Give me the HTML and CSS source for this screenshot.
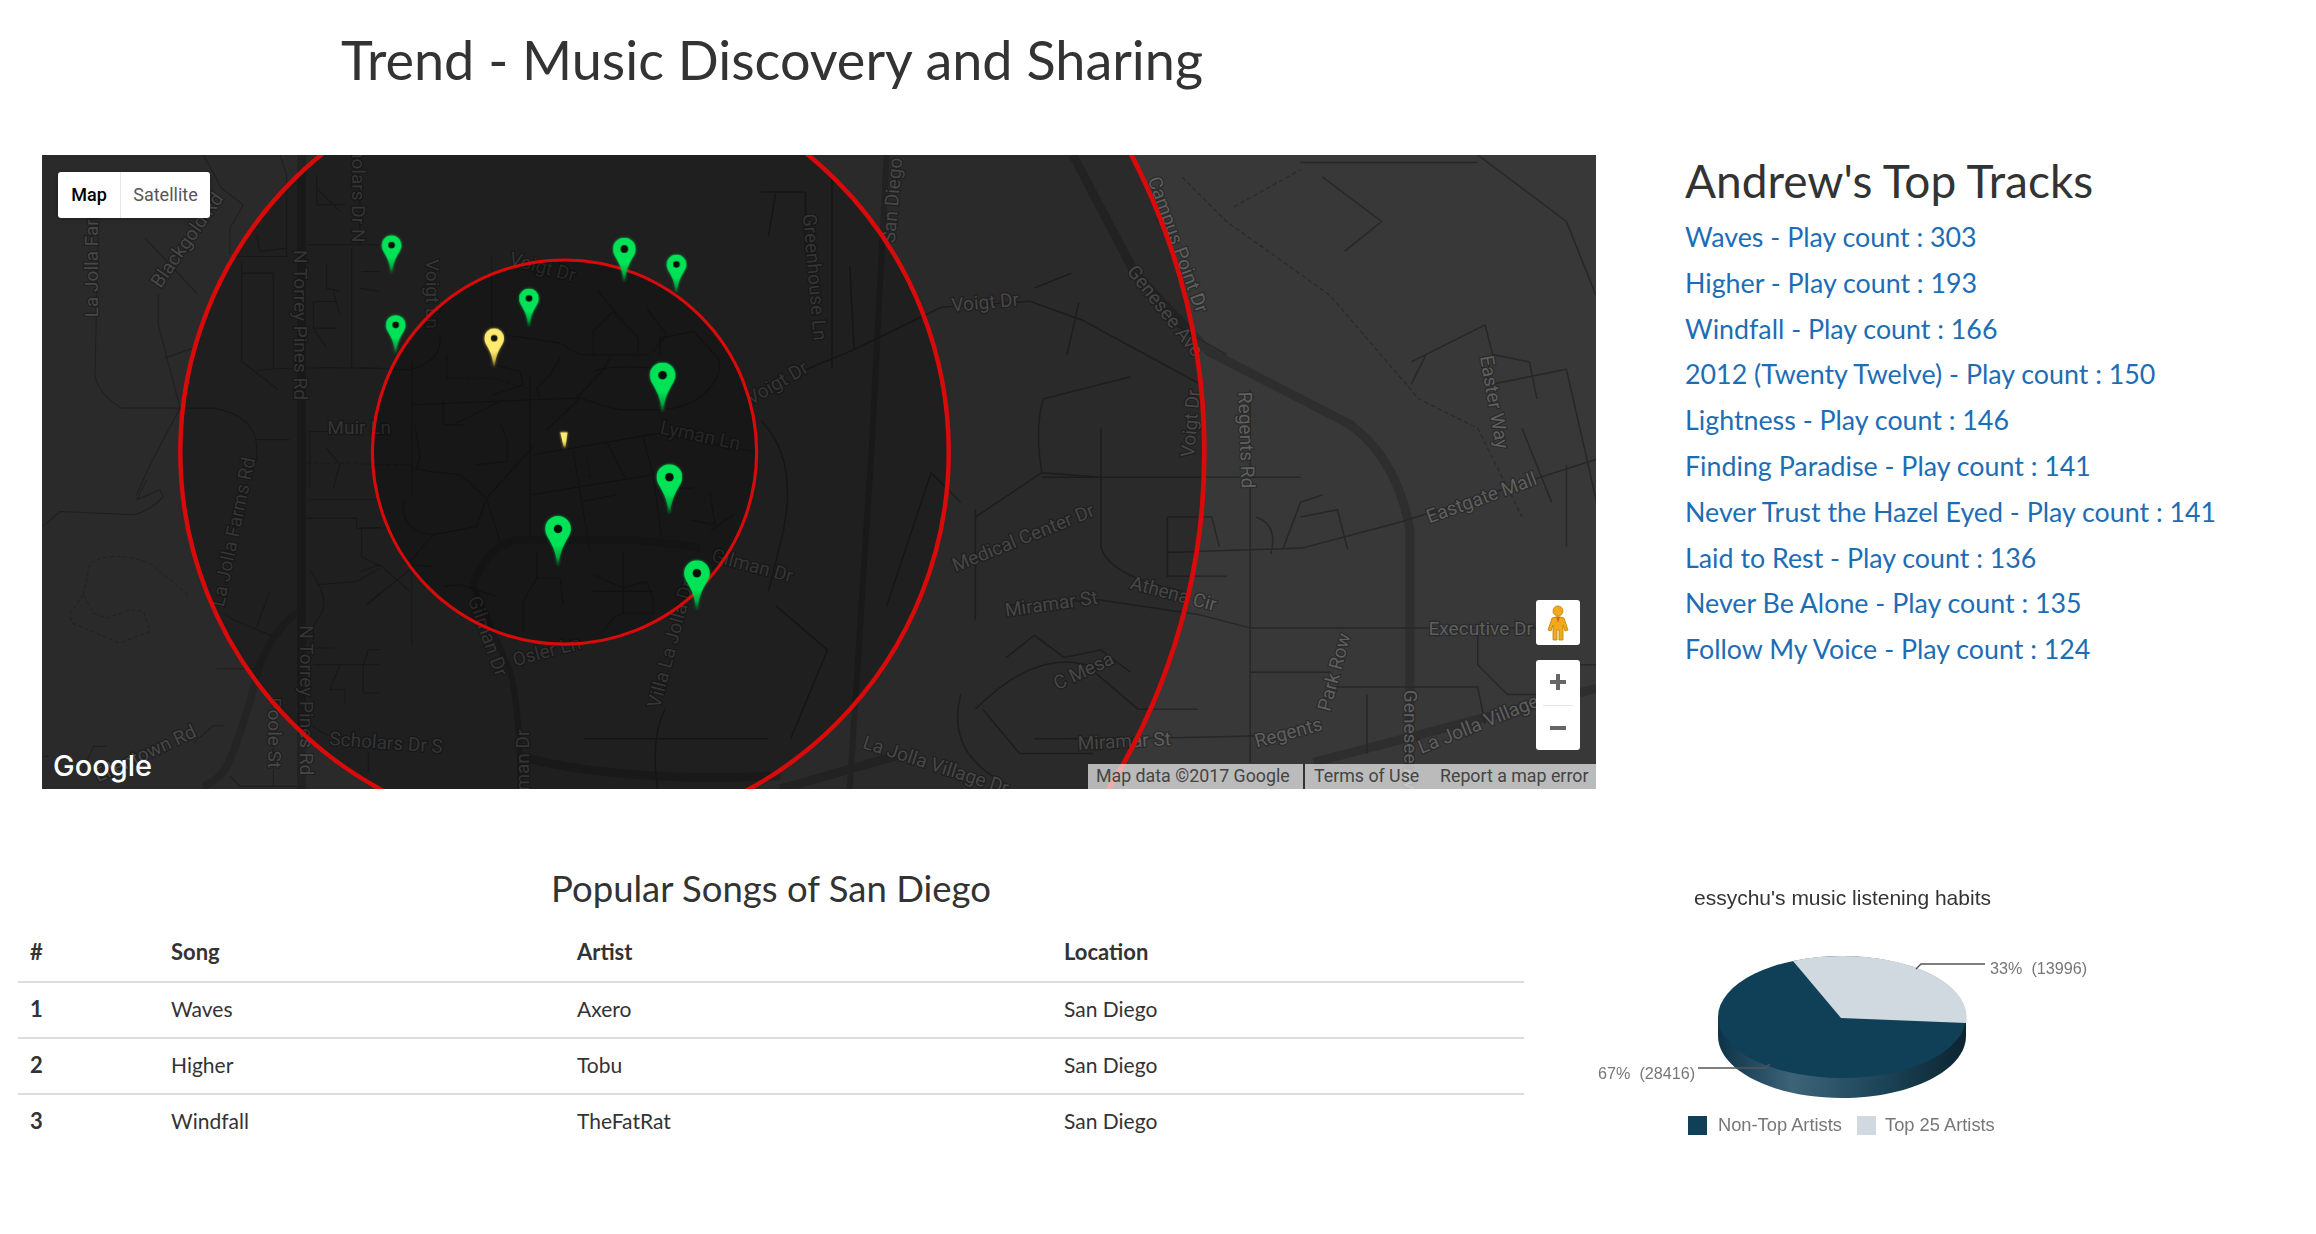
FILE: index.html
```html
<!DOCTYPE html>
<html lang="en">
<head>
    <meta charset="UTF-8">
    <meta name="viewport" content="width=device-width, initial-scale=1.0">
    <title>Trend - Music Discovery and Sharing</title>
    <link rel="stylesheet" href="styles.css">
</head>
<body>
    <header class="title-row">
        <h1>Trend - Music Discovery and Sharing</h1>
    </header>

    <div class="map-row">
        <div class="map">
            <svg class="map-canvas" viewBox="28.4 105 1051.6 429" width="1554" height="634">
                <defs>
                    <linearGradient id="tail-green" x1="0" y1="0" x2="0" y2="1">
                        <stop offset="0.6" stop-color="#00e356"/>
                        <stop offset="0.85" stop-color="#00a63e"/>
                        <stop offset="1" stop-color="#0a3a1c"/>
                    </linearGradient>
                    <linearGradient id="tail-yellow" x1="0" y1="0" x2="0" y2="1">
                        <stop offset="0.6" stop-color="#ffec6e"/>
                        <stop offset="0.85" stop-color="#c9b23e"/>
                        <stop offset="1" stop-color="#4a4218"/>
                    </linearGradient>
                    <symbol id="pin-green" viewBox="0 0 20 38">
                        <path d="M10 0A10 10 0 0 1 20 10C20 17 12 21 10.6 38H9.4C8 21 0 17 0 10A10 10 0 0 1 10 0Z" fill="url(#tail-green)"/>
                        <circle cx="10" cy="10" r="3.3" fill="#0a0f0a"/>
                    </symbol>
                    <symbol id="pin-yellow" viewBox="0 0 20 38">
                        <path d="M10 0A10 10 0 0 1 20 10C20 17 12 21 10.6 38H9.4C8 21 0 17 0 10A10 10 0 0 1 10 0Z" fill="url(#tail-yellow)"/>
                        <circle cx="10" cy="10" r="3.3" fill="#14120a"/>
                    </symbol>
                </defs>

                <!-- main roads -->
                <g class="road-wide">
                    <path d="M726 105L768 185L818 238L913 287Q945 310 954 358V534"/>
                    <path d="M889 516L1080 466"/>
                    <path d="M528 534L612 510"/>
                    <path d="M204 105V534"/>
                    <path d="M320 396L345 454Q352 480 352 534" stroke-width="4"/>
                    <path d="M600 105L590 300L575 534" stroke-width="4"/>
                    <path d="M352 512Q420 530 528 525"/>
                </g>

                <!-- streets -->
                <g class="road">
                    <path d="M541 252L577 237L637 208L697 204L733 217L814 261"/>
                    <path d="M789 374L881 371L949 353L1080 311"/>
                    <path d="M680 410L743 406L811 416L846 425H949L1040 425"/>
                    <path d="M846 264V516"/>
                    <path d="M563 120V250"/>
                    <path d="M578 237L575 180"/>
                    <path d="M520 160L525 130M545 170V130H515"/>
                    <path d="M515 285Q540 310 530 360L520 400"/>
                    <path d="M525 410L560 440L535 500"/>
                    <path d="M395 500H520M450 480Q440 500 445 534"/>
                    <path d="M700 195L725 185M722 240L730 205M795 220L830 240"/>
                    <path d="M706 270L765 255"/>
                    <path d="M706 270Q700 290 705 320"/>
                    <path d="M705 323H745V290"/>
                    <path d="M660 350L705 320L745 323V370Q750 390 800 400"/>
                    <path d="M745 323H880"/>
                    <path d="M660 345V420"/>
                    <path d="M790 350H820L825 370"/>
                    <path d="M790 350V390H830"/>
                    <path d="M650 340L630 320Q610 380 600 410"/>
                    <path d="M660 480Q700 440 735 450L770 480L810 480"/>
                    <path d="M650 470Q640 510 680 530"/>
                    <path d="M665 480L690 510L740 510"/>
                    <path d="M681 445L700 430L720 445L745 440L765 455"/>
                    <path d="M700 500Q790 500 850 498"/>
                    <path d="M850 350Q865 355 860 375"/>
                    <path d="M868 372L880 340L895 335"/>
                    <path d="M880 350L905 345L912 372"/>
                    <path d="M846 455H900"/>
                    <path d="M900 465H1000L1005 490"/>
                    <path d="M925 470V510"/>
                    <path d="M1005 220L1010 240L1035 245L1040 270"/>
                    <path d="M1005 220L955 245"/>
                    <path d="M1010 260L1060 250L1085 360"/>
                    <path d="M1030 290L1050 340"/>
                    <path d="M1060 315V370"/>
                    <path d="M955 260L965 240"/>
                    <path d="M895 120L935 150L910 170"/>
                    <path d="M880 110H1000"/>
                    <path d="M1000 105L1060 150L1080 200"/>
                    <path d="M1000 430V450L1020 470L1040 470"/>
                    <path d="M1040 450H1080"/>
                </g>
                <g class="road-dash">
                    <path d="M800 120L830 150L900 200L960 270L1000 290L1020 330L1030 350"/>
                    <path d="M835 140L880 115"/>
                </g>

                <!-- streets around the campus, traced at 3x page pixels -->
                <g class="road-trace" transform="scale(0.6766) translate(360 255) scale(0.3333)">
                    <path class="road-thick" d="M1020 880Q850 850 700 855H480Q380 870 340 990"/>
                    <path d="M0 340L150 345Q250 320 240 240"/>
                    <path d="M395 0V210Q400 240 470 245L600 265L660 300H870"/>
                    <path d="M700 300V230L760 170L835 250V300"/>
                    <path d="M715 110L770 175"/>
                    <path d="M860 160L920 240L880 290"/>
                    <path d="M900 300V250L1000 230"/>
                    <path d="M1000 230L1075 310Q1090 350 1050 400Q1000 460 900 465H780L720 450L660 430L560 525"/>
                    <path d="M160 450L400 440L510 435L660 430"/>
                    <path d="M510 365V850"/>
                    <path d="M520 600L900 535L1180 590"/>
                    <path d="M515 720L880 660"/>
                    <path d="M640 590L660 710L690 890"/>
                    <path d="M740 560L795 670"/>
                    <path d="M850 550L880 660L905 850"/>
                    <path d="M670 740L770 720"/>
                    <path d="M420 860L380 730L520 575"/>
                    <path d="M380 730L300 660L210 650L160 640"/>
                    <path d="M155 320V720"/>
                    <path d="M130 740Q120 830 220 840L350 815L380 730"/>
                    <path d="M220 840L150 920"/>
                    <path d="M10 820H90L140 930L220 935"/>
                    <path d="M20 1050L155 940"/>
                    <path d="M0 950L60 930L150 1010"/>
                    <path d="M155 940V1170"/>
                    <path d="M250 995L300 990L410 1025"/>
                    <path d="M490 1130V1040L530 970V890"/>
                    <path d="M530 970H600L610 1050"/>
                    <path d="M700 960L790 1000L860 980L880 1030V1075H790L760 1090L730 1130"/>
                    <path d="M790 890V1075"/>
                    <path d="M700 1010H880"/>
                    <path d="M420 440L280 510"/>
                    <path d="M420 510Q450 550 440 620L350 630"/>
                    <path d="M1000 700H960M1050 715L1065 810L990 795M1050 830L1120 780"/>
                    <path d="M600 310L570 360L530 400L540 430"/>
                    <path d="M750 310L730 345L650 430"/>
                    <path d="M700 350Q750 330 880 340"/>
                    <path d="M165 510L180 610L170 640"/>
                    <path d="M250 430V510H310"/>
                    <path d="M260 370V300"/>
                    <path d="M400 330L480 350L490 390L400 420"/>
                    <path class="dash-fine" d="M260 370H400L500 400"/>
                    <path class="dash-fine" d="M0 630H150"/>
                    <path class="dash-fine" d="M680 600L690 670"/>
                </g>
                <g class="road-trace" transform="scale(0.6766) translate(40 155) scale(0.3333)">
                    <path d="M175 200L165 660Q175 720 245 760H520Q640 780 650 870V920"/>
                    <path d="M355 420V510L420 760"/>
                    <path d="M570 300V220L610 150L545 100L490 0"/>
                    <path d="M315 250L470 415"/>
                    <path d="M375 610L460 580"/>
                    <path d="M420 760L330 930L290 1020"/>
                    <path d="M650 855H750"/>
                    <path d="M605 320V620L715 705"/>
                    <path d="M605 355H700V640"/>
                    <path d="M650 650Q660 635 1020 640"/>
                    <path d="M590 305H740V60L720 0"/>
                    <path d="M650 240L660 290L740 280"/>
                    <path d="M800 270H1020"/>
                    <path d="M935 280V640"/>
                    <path d="M820 440H890M820 440V520L860 580M860 330V400L900 410M820 520H890M880 410L900 480"/>
                    <path d="M830 60V150H915M830 100L900 170M960 60V270M965 350H1020M960 400L1020 410"/>
                    <path d="M810 830H880M810 830V1000M860 880L900 930L880 1000"/>
                    <path class="dash-fine" d="M800 925H1000"/>
                </g>
                <g class="road-trace" transform="scale(0.6766) translate(40 480) scale(0.3333)">
                    <path class="road-thick" d="M770 400Q680 470 650 590Q600 780 560 860Q540 900 490 920"/>
                    <path d="M10 140L60 95L280 105Q330 95 370 50L360 30L290 60L320 0"/>
                    <path d="M550 400L580 420L700 470M650 440L690 335"/>
                    <path d="M530 567H650"/>
                    <path d="M700 750V920M570 890L600 920H790"/>
                    <path d="M550 738H520L460 790M10 830H25M130 870L160 800H200"/>
                    <path d="M800 115H950V145H1020M810 60H1020M965 145V230L1020 260"/>
                    <path d="M810 270Q860 340 850 390L820 440V480M830 315L950 305L1020 265M980 375L1020 340"/>
                    <path d="M815 505H880M820 555H1020M900 555L870 630H915V670M970 560V640H1020M990 510H1020M985 510L970 560"/>
                    <path d="M820 740Q860 770 880 770M985 820V880"/>
                    <path class="dash-fine" d="M130 345L150 250Q220 210 330 250L450 350"/>
                    <path class="dash-fine" d="M130 345L90 400L95 430L240 490L330 455L310 395L270 390L200 415L160 400L130 345"/>
                </g>

                <!-- street names -->
                <g class="labels">
                    <text transform="translate(66 176) rotate(-90)">La Jolla Farm</text>
                    <text transform="translate(130 165) rotate(-55)">Blackgold Rd</text>
                    <text transform="translate(238 125) rotate(90)">Scholars Dr N</text>
                    <text transform="translate(199 220) rotate(90)">N Torrey Pines Rd</text>
                    <text transform="translate(288 199) rotate(90)">Voigt Ln</text>
                    <text transform="translate(366 185) rotate(15)">Voigt Dr</text>
                    <text x="243" y="294">Muir Ln</text>
                    <text transform="translate(473 299) rotate(12)">Lyman Ln</text>
                    <text transform="translate(162 361) rotate(-78)">La Jolla Farms Rd</text>
                    <text transform="translate(203 474) rotate(90)">N Torrey Pines Rd</text>
                    <text transform="translate(181 496) rotate(90)">Poole St</text>
                    <text transform="translate(261 507) rotate(4)">Scholars Dr S</text>
                    <text transform="translate(326 432) rotate(70)">Gilman Dr</text>
                    <text transform="translate(371 445) rotate(-15)">Osler Ln</text>
                    <text transform="translate(508 387) rotate(15)">Gilman Dr</text>
                    <text transform="translate(458 437) rotate(-75)">Villa La Jolla Dr</text>
                    <text transform="translate(100 514) rotate(-25)">Ellentown Rd</text>
                    <text transform="translate(358 522) rotate(-90)">Gilman Dr</text>
                    <text transform="translate(528 263) rotate(-30)">Voigt Dr</text>
                    <text transform="translate(608 136) rotate(-85)">San Diego</text>
                    <text transform="translate(547 188) rotate(85)">Greenhouse Ln</text>
                    <text transform="translate(667 209) rotate(-5)">Voigt Dr</text>
                    <text transform="translate(793 167) rotate(70)">Campus Point Dr</text>
                    <text transform="translate(785 213) rotate(52)">Genesee Ave</text>
                    <text transform="translate(810 287) rotate(-85)">Voigt Dr</text>
                    <text transform="translate(839 298) rotate(88)">Regents Rd</text>
                    <text transform="translate(1007 273) rotate(80)">Easter Way</text>
                    <text transform="translate(1004 341) rotate(-20)">Eastgate Mall</text>
                    <text transform="translate(694 368) rotate(-22)">Medical Center Dr</text>
                    <text transform="translate(712 413) rotate(-8)">Miramar St</text>
                    <text transform="translate(793 406) rotate(15)">Athena Cir</text>
                    <text transform="translate(735 458) rotate(-25)">C Mesa</text>
                    <text x="1002" y="430">Executive Dr</text>
                    <text transform="translate(873 500) rotate(-15)">Regents</text>
                    <text transform="translate(907 456) rotate(-75)">Park Row</text>
                    <text transform="translate(761 506) rotate(-3)">Miramar St</text>
                    <text transform="translate(632 522) rotate(18)">La Jolla Village Dr</text>
                    <text transform="translate(1002 494) rotate(-22)">La Jolla Village</text>
                    <text transform="translate(950 504) rotate(90)">Genesee Ave</text>
                </g>

                <!-- radius circles -->
                <g class="radius">
                    <circle cx="382" cy="306" r="433"/>
                    <circle class="radius-mid" cx="382" cy="306" r="260"/>
                    <circle class="radius-inner" cx="382" cy="306" r="130"/>
                </g>

                <!-- markers -->
                <g class="pins-green">
                    <use href="#pin-green" x="258.2" y="159.2" width="13.5" height="25.7"/>
                    <use href="#pin-green" x="414.7" y="160.8" width="15.5" height="29.5"/>
                    <use href="#pin-green" x="451" y="172.2" width="13.5" height="25.7"/>
                    <use href="#pin-green" x="351.2" y="195.2" width="13.5" height="25.7"/>
                    <use href="#pin-green" x="261" y="213.2" width="13.5" height="25.7"/>
                    <use href="#pin-green" x="439.6" y="245.2" width="17.5" height="33.2"/>
                    <use href="#pin-green" x="444.2" y="314.2" width="17.5" height="33.2"/>
                    <use href="#pin-green" x="368.8" y="349.2" width="17.5" height="33.2"/>
                    <use href="#pin-green" x="462.8" y="379.2" width="17.5" height="33.2"/>
                </g>
                <g class="pins-yellow">
                    <use href="#pin-yellow" x="327.6" y="222.2" width="13.5" height="25.7"/>
                    <path d="M379 292.6H384L382.5 303H381.5Z" fill="url(#tail-yellow)"/>
                </g>
            </svg>

            <div class="map-type">
                <span class="map-type-on">Map</span>
                <span class="map-type-off">Satellite</span>
            </div>
            <span class="google-logo">Google</span>

            <div class="pegman">
                <svg viewBox="0 0 24 36" width="24" height="36">
                    <circle cx="12" cy="6" r="5" fill="#f5a81c" stroke="#b8860b" stroke-width="0.8"/>
                    <path d="M6 13Q12 10 18 13L22 25L19 26L17 20V35H13V25H11V35H7V20L5 26L2 25Z" fill="#f5a81c" stroke="#b8860b" stroke-width="0.8"/>
                    <path d="M10 12L12 18L14 12" fill="#d8662a"/>
                </svg>
            </div>
            <div class="zoom-box">
                <button class="zoom-btn">
                    <svg viewBox="0 0 18 18" width="18" height="18"><path d="M7 1H11V7H17V11H11V17H7V11H1V7H7Z" fill="#666"/></svg>
                </button>
                <div class="zoom-sep"></div>
                <button class="zoom-btn">
                    <svg viewBox="0 0 18 18" width="18" height="18"><path d="M1 7H17V11H1Z" fill="#666"/></svg>
                </button>
            </div>
            <div class="attribution">
                <span class="attr-data">Map data ©2017 Google</span>
                <span class="attr-terms">Terms of Use</span>
                <span>Report a map error</span>
            </div>
        </div>

        <aside class="tracks">
            <h2>Andrew's Top Tracks</h2>
            <a href="#">Waves - Play count : 303</a>
            <a href="#">Higher - Play count : 193</a>
            <a href="#">Windfall - Play count : 166</a>
            <a href="#">2012 (Twenty Twelve) - Play count : 150</a>
            <a href="#">Lightness - Play count : 146</a>
            <a href="#">Finding Paradise - Play count : 141</a>
            <a href="#">Never Trust the Hazel Eyed - Play count : 141</a>
            <a href="#">Laid to Rest - Play count : 136</a>
            <a href="#">Never Be Alone - Play count : 135</a>
            <a href="#">Follow My Voice - Play count : 124</a>
        </aside>
    </div>

    <div class="bottom-row">
        <section class="popular">
            <h3>Popular Songs of San Diego</h3>
            <table>
                <thead>
                    <tr><th class="col-num">#</th><th class="col-song">Song</th><th class="col-artist">Artist</th><th>Location</th></tr>
                </thead>
                <tbody>
                    <tr><th>1</th><td>Waves</td><td>Axero</td><td>San Diego</td></tr>
                    <tr><th>2</th><td>Higher</td><td>Tobu</td><td>San Diego</td></tr>
                    <tr><th>3</th><td>Windfall</td><td>TheFatRat</td><td>San Diego</td></tr>
                </tbody>
            </table>
        </section>

        <svg class="pie" viewBox="1590 870 530 290" width="530" height="290">
            <defs>
                <linearGradient id="pie-side" x1="0" y1="0" x2="1" y2="0">
                    <stop offset="0" stop-color="#0d3348"/>
                    <stop offset="0.3" stop-color="#3d6378"/>
                    <stop offset="0.65" stop-color="#1c4559"/>
                    <stop offset="1" stop-color="#0c2430"/>
                </linearGradient>
            </defs>
            <text class="pie-title" x="1694" y="905">essychu's music listening habits</text>
            <path d="M1718 1017V1036C1718 1070 1773 1098 1842 1098S1966 1070 1966 1036V1017Z" fill="url(#pie-side)"/>
            <ellipse cx="1842" cy="1017" rx="124" ry="61" fill="#103f58"/>
            <path d="M1841 1018L1793 961A124 61 0 0 1 1966 1023Z" fill="#d0d9df"/>
            <path class="pie-line" d="M1916 969L1921 964H1985"/>
            <path class="pie-line" d="M1698 1068H1765L1770 1064"/>
            <text class="pie-label" x="1990" y="974">33%  (13996)</text>
            <text class="pie-label" x="1598" y="1079">67%  (28416)</text>
            <rect x="1688" y="1116" width="19" height="19" fill="#103f58"/>
            <text class="pie-legend" x="1718" y="1131">Non-Top Artists</text>
            <rect x="1857" y="1116" width="19" height="19" fill="#d0d9df"/>
            <text class="pie-legend" x="1885" y="1131">Top 25 Artists</text>
        </svg>
    </div>
</body>
</html>
```

FILE: styles.css
```css
body {
    margin: 0;
    background: #fff;
    color: #333;
    font-family: Lato, "Noto Sans", sans-serif;
}
h1, h2, h3 {
    margin: 0;
    font-weight: 400;
}
.title-row {
    width: 1544px;
    height: 155px;
    text-align: center;
}
h1 {
    font-size: 54px;
    line-height: 120px;
}
.map-row {
    display: flex;
    gap: 89px;
    padding-left: 42px;
}
.map {
    position: relative;
    width: 1554px;
    height: 634px;
    overflow: hidden;
    background: #383838;
    flex-shrink: 0;
}
.map-canvas {
    display: block;
}

/* map drawing */
.road, .road-wide, .road-dash, .road-trace {
    fill: none;
    stroke-linejoin: round;
}
.road {
    stroke: #272727;
    stroke-width: 1;
}
.road-trace {
    stroke: #2a2a2a;
    stroke-width: 3.2;
}
.road-trace .road-thick {
    stroke: #303030;
    stroke-width: 22;
}
.road-trace .dash-fine {
    stroke-width: 2.6;
    stroke-dasharray: 12 8;
}
.road-wide {
    stroke: #2e2e2e;
    stroke-width: 6;
}
.road-dash {
    stroke: #282828;
    stroke-width: 0.7;
    stroke-dasharray: 3 2;
}
.labels text {
    font-family: Roboto, sans-serif;
    font-size: 12.9px;
    text-anchor: middle;
    fill: #5f5f5f;
    stroke: #2a2a2a;
    stroke-width: 1.6px;
    paint-order: stroke;
}
.radius circle {
    fill: rgba(0,0,0,0.25);
    stroke: #d90a0a;
    stroke-width: 3.2;
}
.radius .radius-mid {
    stroke-width: 3;
}
.radius .radius-inner {
    stroke-width: 2.1;
}
.pins-green {
    filter: drop-shadow(0 0 1px rgba(0,230,90,0.5));
}
.pins-yellow {
    filter: drop-shadow(0 0 1px rgba(255,236,110,0.5));
}

/* map controls */
.map-type {
    position: absolute;
    left: 16px;
    top: 17px;
    display: flex;
    height: 46px;
    background: #fff;
    border-radius: 3px;
    box-shadow: 0 1px 4px rgba(0,0,0,0.3);
    font-family: Roboto, sans-serif;
    font-size: 18px;
    line-height: 46px;
}
.map-type-on {
    width: 62px;
    text-align: center;
    color: #000;
    font-weight: 500;
    border-right: 1px solid #e6e6e6;
}
.map-type-off {
    width: 89px;
    text-align: center;
    color: #565656;
}
.google-logo {
    position: absolute;
    left: 11px;
    bottom: 5px;
    font-family: Inter, sans-serif;
    font-size: 29px;
    font-weight: 500;
    line-height: 36px;
    color: #fff;
}
.pegman {
    position: absolute;
    left: 1494px;
    top: 445px;
    width: 44px;
    height: 45px;
    display: flex;
    align-items: center;
    justify-content: center;
    background: #fff;
    border-radius: 3px;
}
.zoom-box {
    position: absolute;
    left: 1494px;
    top: 505px;
    width: 44px;
    height: 90px;
    background: #fff;
    border-radius: 3px;
    display: flex;
    flex-direction: column;
    align-items: center;
}
.zoom-btn {
    flex: 1;
    padding: 0;
    border: none;
    background: none;
    display: flex;
    align-items: center;
}
.zoom-sep {
    width: 30px;
    height: 1px;
    background: #e6e6e6;
}
.attribution {
    position: absolute;
    right: 0;
    bottom: 0;
    width: 508px;
    height: 25px;
    box-sizing: border-box;
    display: flex;
    padding-left: 8px;
    background: rgba(255,255,255,0.66);
    font-family: Roboto, sans-serif;
    font-size: 17.8px;
    line-height: 23px;
    color: #444;
    white-space: nowrap;
}
.attr-data {
    width: 207px;
    border-right: 2px solid #333;
}
.attr-terms {
    margin-left: 9px;
    width: 126px;
}

/* right column */
.tracks {
    display: flex;
    flex-direction: column;
    font-size: 26.8px;
    line-height: 45.8px;
}
.tracks h2 {
    font-size: 46px;
    line-height: 52px;
    margin-bottom: 8px;
}
.tracks a {
    color: #1d6db5;
    text-decoration: none;
}

/* bottom row */
.bottom-row {
    display: flex;
    gap: 66px;
    margin-top: 81px;
    padding-left: 18px;
}
.popular {
    width: 1506px;
}
.popular h3 {
    font-size: 36.5px;
    line-height: 36px;
    margin-bottom: 20px;
    text-align: center;
}
table {
    width: 100%;
    border-collapse: collapse;
    table-layout: fixed;
    font-size: 21px;
}
th, td {
    height: 56px;
    padding: 0 12px 4px;
    text-align: left;
    box-sizing: border-box;
}
th {
    font-size: 22px;
    font-weight: 700;
}
tbody tr {
    border-top: 2px solid #ddd;
}
.col-num {
    width: 141px;
}
.col-song {
    width: 406px;
}
.col-artist {
    width: 487px;
}
.pie {
    flex-shrink: 0;
    filter: blur(0.5px);
}
.pie-title {
    font-family: "Liberation Sans", sans-serif;
    font-size: 21px;
    fill: #333;
}
.pie-label {
    font-family: "Liberation Sans", sans-serif;
    font-size: 16.2px;
    fill: #777;
    white-space: pre;
}
.pie-legend {
    font-family: "Liberation Sans", sans-serif;
    font-size: 18.3px;
    fill: #777;
}
.pie-line {
    fill: none;
    stroke: #555;
    stroke-width: 1.4;
}
```
